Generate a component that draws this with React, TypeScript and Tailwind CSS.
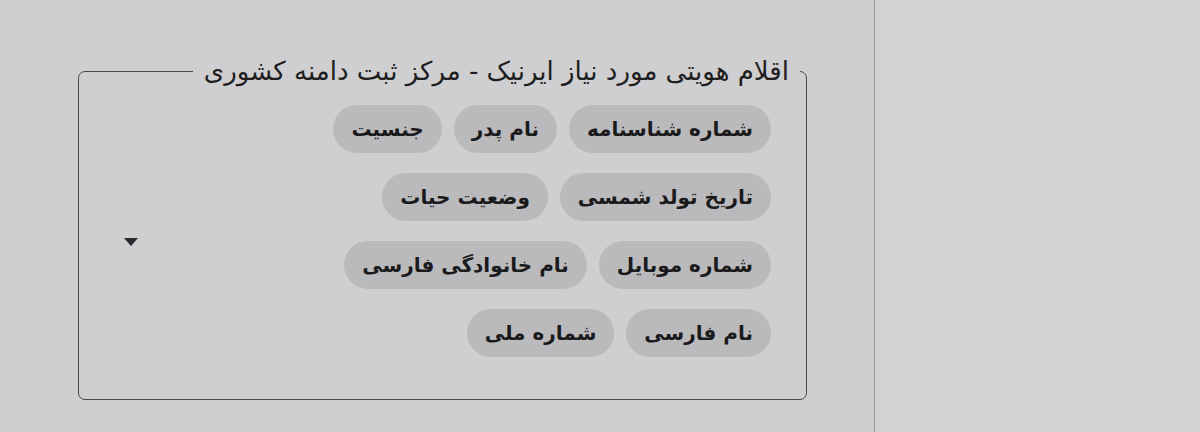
import React from "react";

const rows: string[][] = [
  ["شماره شناسنامه", "نام پدر", "جنسیت"],
  ["تاریخ تولد شمسی", "وضعیت حیات"],
  ["شماره موبایل", "نام خانوادگی فارسی"],
  ["نام فارسی", "شماره ملی"],
];

export default function App() {
  return (
    <div
      className="flex h-[432px] w-[1200px] overflow-hidden bg-[#cfcfd1] text-[#1c1c1e]"
      style={{ fontFamily: '"DejaVu Sans", "Noto Sans", sans-serif' }}
    >
      <div className="w-[874px] shrink-0 pl-[78px] pt-[53px]">
        <fieldset
          dir="rtl"
          className="m-0 h-[347px] w-[729px] min-w-0 rounded-[7px] border-[1.5px] border-[#48484a] p-0"
        >
          <legend className="mr-[6px] px-[11px] text-[26px] leading-[36px] text-[#1e1e20]">
            اقلام هویتی مورد نیاز ایرنیک - مرکز ثبت دامنه کشوری
          </legend>
          <div className="flex items-center justify-between pr-[35px] pl-[44px] pt-[16px]">
            <div className="flex flex-col gap-[20px]">
              {rows.map((row, i) => (
                <div key={i} className="flex gap-[12px]">
                  {row.map((chip) => (
                    <span
                      key={chip}
                      className="flex h-[48px] items-center rounded-full bg-[#bababc] px-[18px] text-[20px] font-bold text-[#1a1a1c]"
                    >
                      {chip}
                    </span>
                  ))}
                </div>
              ))}
            </div>
            <svg width="16" height="10" viewBox="0 0 16 10" className="mt-[22px]">
              <path d="M1 1 L15 1 L8 9 Z" fill="#2a2a2e" />
            </svg>
          </div>
        </fieldset>
      </div>
      <div className="flex-1 border-l-[1.5px] border-[#9a9a9e] bg-[#d2d2d4]" />
    </div>
  );
}
